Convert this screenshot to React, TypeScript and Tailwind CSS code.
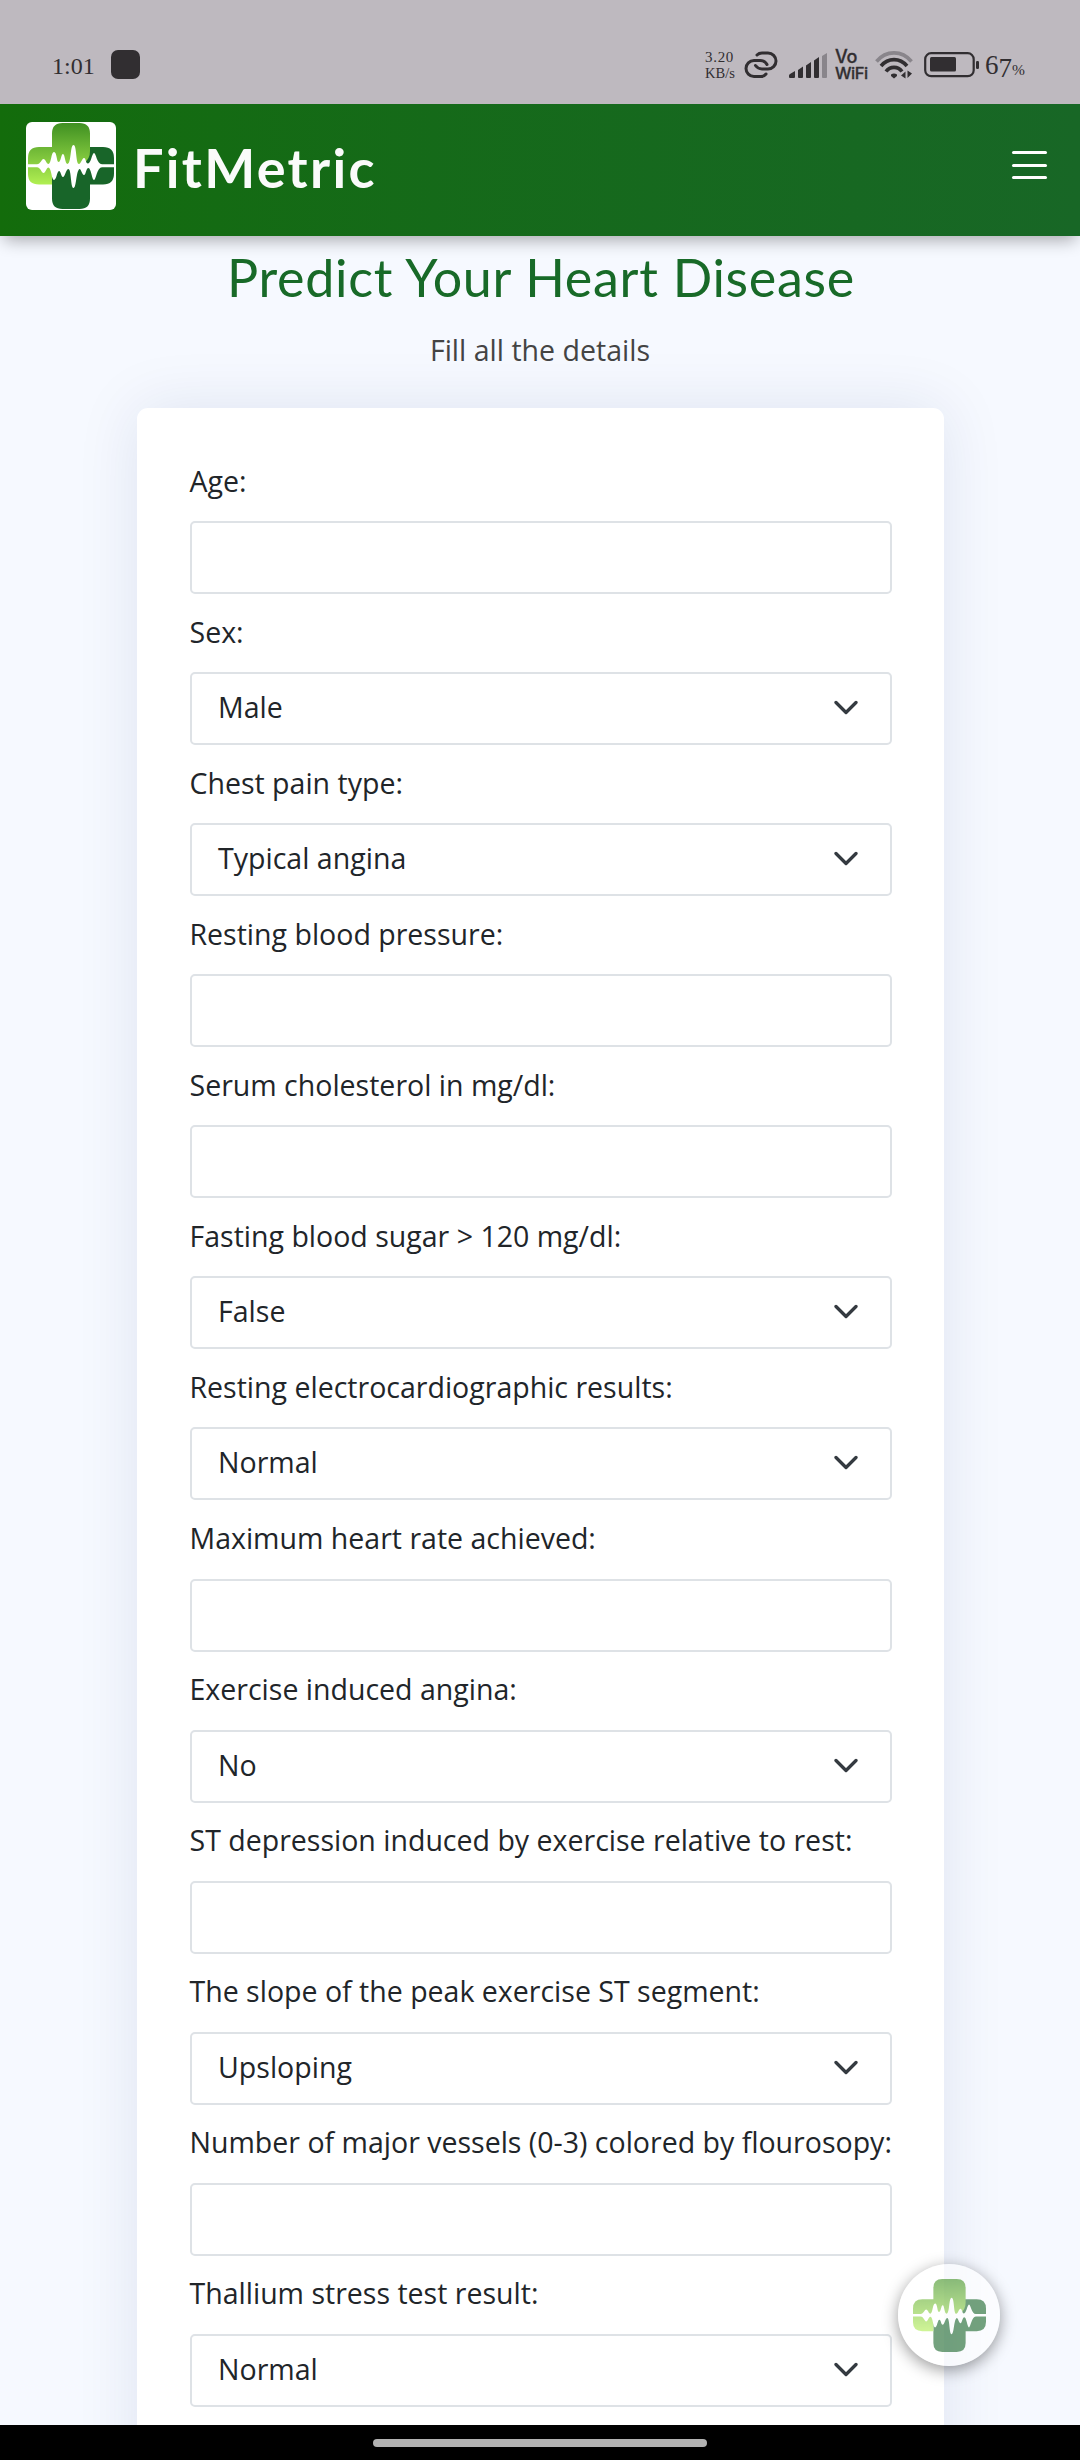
import React from "react";

type Field = { label: string; value?: string };

const fields: Field[] = [
  { label: "Age:" },
  { label: "Sex:", value: "Male" },
  { label: "Chest pain type:", value: "Typical angina" },
  { label: "Resting blood pressure:" },
  { label: "Serum cholesterol in mg/dl:" },
  { label: "Fasting blood sugar > 120 mg/dl:", value: "False" },
  { label: "Resting electrocardiographic results:", value: "Normal" },
  { label: "Maximum heart rate achieved:" },
  { label: "Exercise induced angina:", value: "No" },
  { label: "ST depression induced by exercise relative to rest:" },
  { label: "The slope of the peak exercise ST segment:", value: "Upsloping" },
  { label: "Number of major vessels (0-3) colored by flourosopy:" },
  { label: "Thallium stress test result:", value: "Normal" },
];

/* Medical cross with a heartbeat wave; drawn on an 86 x 86 grid. */
function CrossLogo({ id, className, wave = "#fff" }: { id: string; className?: string; wave?: string }) {
  return (
    <svg viewBox="0 0 86 86" className={className} fill="none">
      <defs>
        <linearGradient id={id} x1="0" y1="0" x2="0" y2="62" gradientUnits="userSpaceOnUse">
          <stop offset="0" stopColor="#3f9022" />
          <stop offset="1" stopColor="#b2f052" />
        </linearGradient>
      </defs>
      <path
        d="M58 24H75Q86 24 86 35V50.500Q86 61.500 75 61.500H62V75.500Q62 86 51.500 86H34.500Q24 86 24 75.500V40H58Z"
        fill="#186529"
      />
      <path
        d="M34.500 0H51.500Q62 0 62 10.500V28Q62 36 56 40L50 44H24V61.500H11Q0 61.500 0 51V35Q0 24 11 24H24V10.500Q24 0 34.500 0Z"
        fill={`url(#${id})`}
      />
      <path
        d="M0 41.300H9C12.500 41.300 13.500 36 15.500 36S18.500 41 20.500 41C23.500 40 23 29 26 29S28.500 39 30.500 39C33 39 33 31 35 31S37 41 39.500 41C43.500 40 42 22 45.500 22S47.500 41 51 41C53 41 54 35 56 35S57.500 40.500 60 40.500C63 40.500 64 30 66 30S69 41.300 74 41.300H86V44.300H74C69 44.300 68 57 66 57S63 45 60.500 45C58 45 58 52 56 52S53 45.500 51.500 46C48 48 48.500 65 45.500 65S43.500 47 40.500 46C38 46 37 54 35 54S33 48 31 48C29 48 28.500 57 26 57S23.500 45 20.500 44.500C18.500 44.500 17.500 50 15.500 50S12.500 44.300 9 44.300H0Z"
        fill={wave}
      />
    </svg>
  );
}

function StatusIcons() {
  return (
    <div className="flex items-center">
      <div className="mr-[7px] flex w-[32px] flex-col">
        <span className="text-[15px] leading-[16px] tracking-[0.7px]">3.20</span>
        <span className="text-[14.500px] leading-[16px]">KB/s</span>
      </div>
      <svg className="h-[28px] w-[35px]" viewBox="0 0 35 28" fill="none" stroke="#312e31" strokeWidth="3" strokeLinecap="round">
        <path d="M13 4Q15 2 18 2H24A8 8 0 0 1 24 18H18Q14 18 11.500 14.500" />
        <path d="M22 23Q20 25.500 17 25.500H10A8 8 0 0 1 10 9.500H16Q21 9.500 23 13.500" />
      </svg>
      <svg className="ml-[10px] h-[28px] w-[39px]" viewBox="0 0 39 28" fill="#312e31">
        <path d="M0 26V24.500Q0 23.500 1 23L6 20V26Q6 27 5 27H1Q0 27 0 26Z" />
        <path d="M9 19L14 15.500V26Q14 27 13 27H10Q9 27 9 26Z" />
        <path d="M17 14.500L22 11V26Q22 27 21 27H18Q17 27 17 26Z" />
        <path d="M25 9.500L30 6V26Q30 27 29 27H26Q25 27 25 26Z" />
        <path d="M33 5L38 2V26Q38 27 37 27H34Q33 27 33 26Z" fill="#89858b" />
      </svg>
      <div className="ml-[7px] flex w-[34px] flex-col font-['Inter',sans-serif] text-[18px] font-medium [-webkit-text-stroke:0.3px_#312e31]">
        <span className="leading-[16px] tracking-[-0.3px]">Vo</span>
        <span className="text-[16.500px] leading-[16px] tracking-[-0.5px]">WiFi</span>
      </div>
      <svg className="ml-[6px] h-[30px] w-[38px]" viewBox="0 0 38 30" fill="none" strokeWidth="3.600">
        <path d="M1.500 11.500C11 0 27 0 36.500 11.500" stroke="#89858b" />
        <path d="M6 16C13 7.500 25 7.500 32 16" stroke="#312e31" />
        <path d="M11 21.500C15 16 23 16 27 21.500" stroke="#312e31" />
        <path d="M16 24.500Q19 22.500 22 24.500V26L19 28.500L16 26Z" fill="#312e31" />
        <path d="M26 25.500L30.500 21.500V28.500ZM37 23.500L32.500 28V20.500Z" fill="#312e31" />
      </svg>
      <svg className="ml-[11px] h-[26px] w-[56px]" viewBox="0 0 56 26" fill="none">
        <rect x="1.200" y="1.200" width="48.500" height="23" rx="6" stroke="#312e31" strokeWidth="2.200" />
        <rect x="6" y="5" width="26" height="14.500" rx="1.500" fill="#312e31" />
        <rect x="52" y="9" width="3" height="8" rx="1.200" fill="#312e31" />
      </svg>
      <span className="mt-[4px] ml-[5px] flex text-[27px] leading-[28px]">
        <span>6</span>
        <span className="mt-[3px]">7</span>
      </span>
      <span className="mt-[10px] w-[12px] text-[15.500px]">%</span>
    </div>
  );
}

function FormField({ label, value }: Field) {
  return (
    <div className="h-[151.080px]">
      <div className="flex h-[69px] items-start pt-[6.500px] text-[28.520px] leading-[44px] whitespace-nowrap">{label}</div>
      <div className="flex h-[73px] items-center justify-between rounded-[5px] border-2 border-[#dee2e6] bg-white pr-[32px] pb-[3px] pl-[26.500px]">
        <span className="text-[28.550px] leading-[44px]">{value}</span>
        {value && (
          <svg className="h-[24px] w-[24px]" viewBox="0 0 24 24" fill="none" stroke="#343a40" strokeWidth="3.300" strokeLinecap="round" strokeLinejoin="round">
            <path d="M2 7.500L12 17.500L22 7.500" />
          </svg>
        )}
      </div>
    </div>
  );
}

export default function App() {
  return (
    <div className="relative flex h-[2460px] w-[1080px] flex-col overflow-hidden bg-[#f6f9ff] font-['Open_Sans',sans-serif] text-[#212529]">
      <div className="z-20 flex h-[104px] shrink-0 items-start justify-between bg-[#beb9bf] pr-[56px] pl-[52px] font-['Liberation_Serif',serif] text-[#312e31]">
        <div className="flex items-center pt-[49px]">
          <span className="mt-[3px] w-[42px] text-[24px] leading-[28px]">1:01</span>
          <span className="ml-[17px] h-[29px] w-[29px] rounded-[7px] bg-[#312e31]" />
        </div>
        <div className="pt-[47px]">
          <StatusIcons />
        </div>
      </div>

      <header className="z-10 flex h-[132px] shrink-0 items-center justify-between bg-linear-to-r from-[#136c0b] to-[#186726] pr-[33px] pl-[26px] shadow-[0_8px_16px_-4px_rgba(0,0,0,0.33)]">
        <div className="flex items-center">
          <div className="mt-[-8px] flex h-[88px] w-[90px] items-center justify-center rounded-[6px] bg-white">
            <CrossLogo id="brand-leaf" className="h-[86px] w-[86px]" />
          </div>
          <span className="mt-[-5px] ml-[17px] font-['Lato',sans-serif] text-[54px] font-bold tracking-[2.300px] text-[#fafbfa]">
            FitMetric
          </span>
        </div>
        <div className="mb-[10px] flex w-[35px] flex-col gap-[9.500px]">
          <span className="h-[3px] rounded-full bg-white" />
          <span className="h-[3px] rounded-full bg-white" />
          <span className="h-[3px] rounded-full bg-white" />
        </div>
      </header>

      <main className="flex min-h-0 flex-1 flex-col items-center">
        <h1 className="mt-[9px] ml-[2px] font-['Lato',sans-serif] text-[52px] leading-[64px] tracking-[0.730px] whitespace-nowrap text-[#186a28]">
          Predict Your Heart Disease
        </h1>
        <p className="mt-[19px] text-[28.550px] leading-[44px] text-[#444444]">Fill all the details</p>
        <section className="mt-[36px] h-[2200px] w-[807px] shrink-0 rounded-t-[11px] bg-white pt-[44px] pr-[52px] pl-[53px] shadow-[0_0_63px_rgba(1,41,112,0.1)]">
          {fields.map((f) => (
            <FormField key={f.label} {...f} />
          ))}
        </section>
      </main>

      <div className="z-20 flex h-[35px] shrink-0 justify-center bg-black">
        <span className="mt-[14px] h-[8px] w-[334px] rounded-full bg-[#b2b2b2]" />
      </div>

      <button className="absolute top-[2264px] left-[898px] z-10 flex h-[102px] w-[102px] items-center justify-center rounded-full bg-white/60 shadow-[0_4px_16px_rgba(0,0,0,0.4)]">
        <CrossLogo id="fab-leaf" className="h-[73px] w-[73px] opacity-60" />
      </button>
    </div>
  );
}
